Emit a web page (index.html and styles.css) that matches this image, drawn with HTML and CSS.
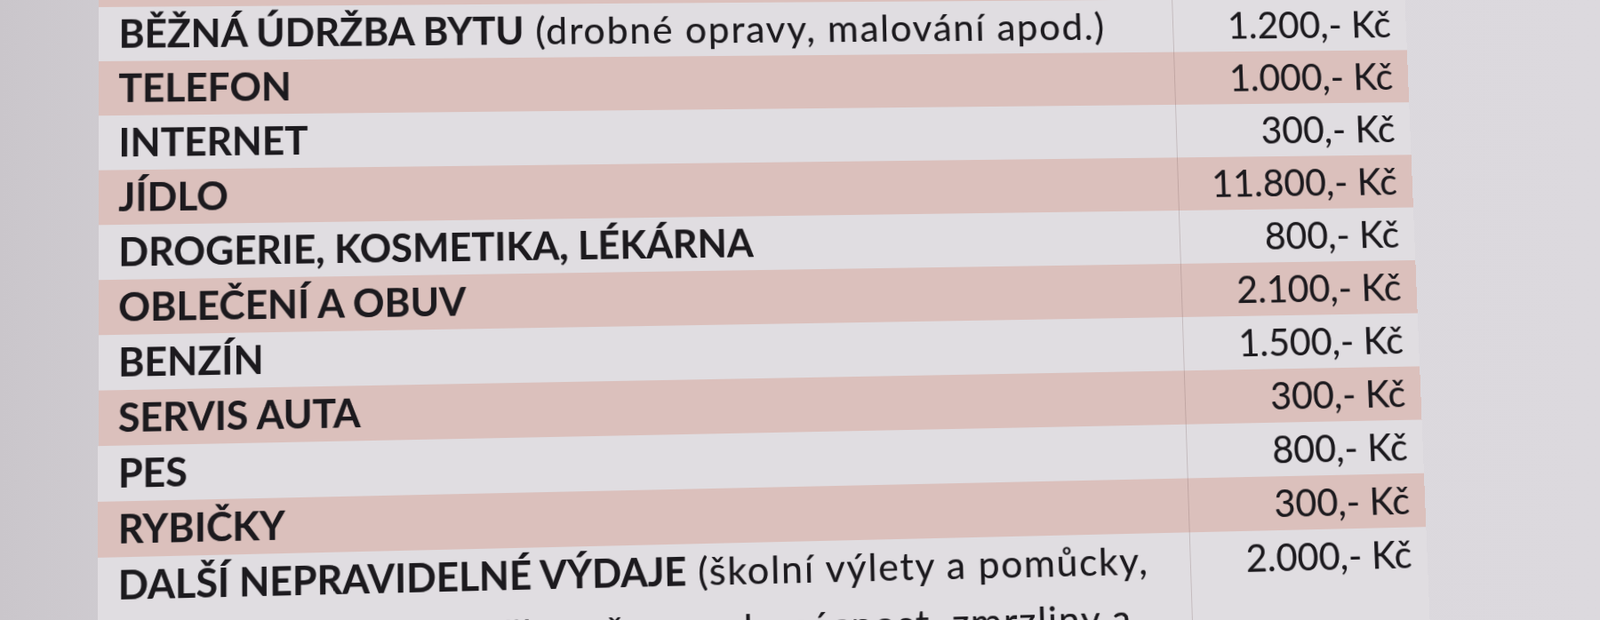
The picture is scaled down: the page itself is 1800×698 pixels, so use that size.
FILE: index.html
```html
<!DOCTYPE html>
<html lang="cs">
<head>
<meta charset="utf-8">
<title>Výdaje</title>
<link rel="stylesheet" href="styles.css">
</head>
<body>
<main class="sheet">
  <div class="table">
    <div class="row pink"><div class="name"></div><div class="amount"></div></div>
    <div class="row"><div class="name"><b>BĚŽNÁ ÚDRŽBA BYTU</b> (drobné opravy, malování apod.)</div><div class="amount">1.200,- Kč</div></div>
    <div class="row pink"><div class="name"><b>TELEFON</b></div><div class="amount">1.000,- Kč</div></div>
    <div class="row"><div class="name"><b>INTERNET</b></div><div class="amount">300,- Kč</div></div>
    <div class="row pink"><div class="name"><b>JÍDLO</b></div><div class="amount">11.800,- Kč</div></div>
    <div class="row"><div class="name"><b>DROGERIE, KOSMETIKA, LÉKÁRNA</b></div><div class="amount">800,- Kč</div></div>
    <div class="row pink"><div class="name"><b>OBLEČENÍ A OBUV</b></div><div class="amount">2.100,- Kč</div></div>
    <div class="row"><div class="name"><b>BENZÍN</b></div><div class="amount">1.500,- Kč</div></div>
    <div class="row pink"><div class="name"><b>SERVIS AUTA</b></div><div class="amount">300,- Kč</div></div>
    <div class="row"><div class="name"><b>PES</b></div><div class="amount">800,- Kč</div></div>
    <div class="row pink"><div class="name"><b>RYBIČKY</b></div><div class="amount">300,- Kč</div></div>
    <div class="row tall"><div class="name"><span class="line"><b>DALŠÍ NEPRAVIDELNÉ VÝDAJE</b> (školní výlety a pomůcky,</span><span class="line cont">drobné nákupy, kroužky, vše pro domácnost, zmrzliny a</span></div><div class="amount">2.000,- Kč</div></div>
  </div>
</main>
</body>
</html>
```
FILE: styles.css
```css
html, body {
  margin: 0;
  height: 698px;
  overflow: hidden;
}
body {
  background: linear-gradient(90deg, #cac6cb 0%, #d2cfd4 12%, #d8d5da 45%, #dbd8dd 75%, #dcd9de 100%);
  font-family: Lato, "Noto Sans", sans-serif;
  color: #1c1a1e;
}
.sheet {
  display: flow-root;
  padding-left: 124px;
}
.table {
  width: 1485.5px;
  margin-top: -62.5px;
  transform-origin: 726px 402.5px;
  transform: perspective(2000px) rotateX(3.3deg) rotateY(3deg) rotate(-1.09deg);
}
.row {
  display: grid;
  grid-template-columns: 1212px 1fr;
  height: 61px;
  background: #e0dde1;
}
.row.pink {
  background: #dbc0bc;
}
.row.tall {
  height: auto;
}
.name {
  padding-left: 21.5px;
  font-size: 43px;
  line-height: 59px;
  letter-spacing: 1.7px;
  white-space: nowrap;
  text-shadow: 0 0 1px rgba(28, 26, 30, 0.4);
}
.name b {
  font-weight: 700;
  letter-spacing: 0;
}
.line {
  display: block;
}
.line.cont {
  margin-top: 5px;
}
.amount {
  border-left: 1.5px solid rgba(125, 100, 100, 0.28);
  text-align: right;
  padding-right: 17.5px;
  font-size: 42.5px;
  line-height: 59px;
  white-space: nowrap;
  text-shadow: 0 0 1px rgba(28, 26, 30, 0.4);
}
```
